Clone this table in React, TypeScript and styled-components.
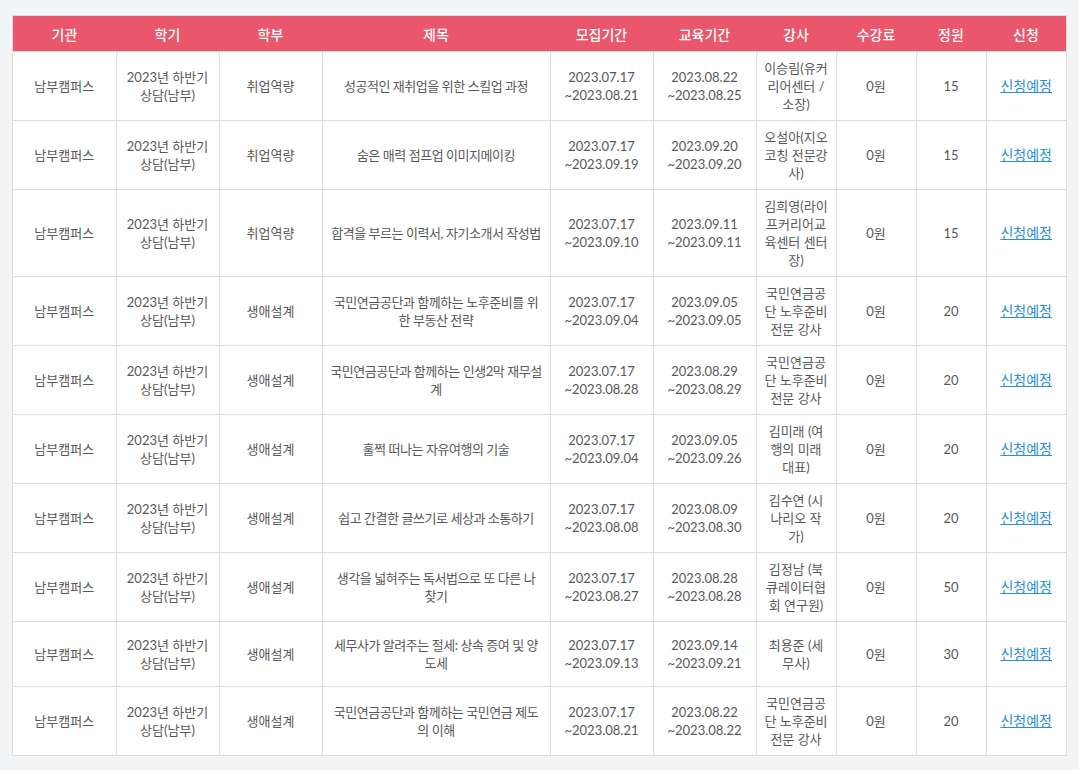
import React from "react";
import styled, { createGlobalStyle } from "styled-components";

const GlobalStyle = createGlobalStyle`
  html, body { margin: 0; padding: 0; background: #f3f4f6; }
  body { font-family: "Lato", "Noto Sans CJK KR", sans-serif; }
`;

const Page = styled.div`
  padding: 15px 14px 12px 12px;
  width: 1053px;
`;

const Table = styled.table`
  width: 1053px;
  border-collapse: collapse;
  table-layout: fixed;
  background: #fff;
  border: 1px solid #dcdcdc;
`;

const HeadCell = styled.th<{ $w: number }>`
  width: ${(p) => p.$w}px;
  height: 35px;
  padding: 0;
  background: #ea566b;
  color: #fff;
  font-size: 14px;
  font-weight: 500;
  text-align: center;
  vertical-align: middle;
  border: none;
`;

const Cell = styled.td`
  height: 50px;
  padding: 7px 8px;
  border: 1px solid #dcdcdc;
  color: #585858;
  font-size: 13px;
  line-height: 18px;
  text-align: center;
  vertical-align: middle;
  word-break: keep-all;
`;

const TitleCell = styled(Cell)`
  padding: 7px 7.5px;
  word-break: break-all;
  letter-spacing: -0.45px;
`;

const LecturerCell = styled(Cell)`
  padding: 7px 7px;
  word-break: break-all;
`;

const ApplyLink = styled.a`
  color: #2b8fd3;
  font-size: 14px;
  text-decoration: underline;
  cursor: pointer;
`;

const columns: [string, number][] = [
  ["기관", 103],
  ["학기", 103],
  ["학부", 103],
  ["제목", 228],
  ["모집기간", 103],
  ["교육기간", 103],
  ["강사", 80],
  ["수강료", 80],
  ["정원", 70],
  ["신청", 80],
];

type Row = {
  dept: string;
  title: string;
  recruit: [string, string];
  edu: [string, string];
  lecturer: string;
  cap: number;
};

const rows: Row[] = [
  { dept: "취업역량", title: "성공적인 재취업을 위한 스킬업 과정", recruit: ["2023.07.17", "~2023.08.21"], edu: ["2023.08.22", "~2023.08.25"], lecturer: "이승림(유커리어센터 / 소장)", cap: 15 },
  { dept: "취업역량", title: "숨은 매력 점프업 이미지메이킹", recruit: ["2023.07.17", "~2023.09.19"], edu: ["2023.09.20", "~2023.09.20"], lecturer: "오설아(지오코칭 전문강사)", cap: 15 },
  { dept: "취업역량", title: "합격을 부르는 이력서, 자기소개서 작성법", recruit: ["2023.07.17", "~2023.09.10"], edu: ["2023.09.11", "~2023.09.11"], lecturer: "김희영(라이프커리어교육센터 센터장)", cap: 15 },
  { dept: "생애설계", title: "국민연금공단과 함께하는 노후준비를 위한 부동산 전략", recruit: ["2023.07.17", "~2023.09.04"], edu: ["2023.09.05", "~2023.09.05"], lecturer: "국민연금공단 노후준비 전문 강사", cap: 20 },
  { dept: "생애설계", title: "국민연금공단과 함께하는 인생2막 재무설계", recruit: ["2023.07.17", "~2023.08.28"], edu: ["2023.08.29", "~2023.08.29"], lecturer: "국민연금공단 노후준비 전문 강사", cap: 20 },
  { dept: "생애설계", title: "훌쩍 떠나는 자유여행의 기술", recruit: ["2023.07.17", "~2023.09.04"], edu: ["2023.09.05", "~2023.09.26"], lecturer: "김미래 (여행의 미래 대표)", cap: 20 },
  { dept: "생애설계", title: "쉽고 간결한 글쓰기로 세상과 소통하기", recruit: ["2023.07.17", "~2023.08.08"], edu: ["2023.08.09", "~2023.08.30"], lecturer: "김수연 (시나리오 작가)", cap: 20 },
  { dept: "생애설계", title: "생각을 넓혀주는 독서법으로 또 다른 나 찾기", recruit: ["2023.07.17", "~2023.08.27"], edu: ["2023.08.28", "~2023.08.28"], lecturer: "김정남 (북큐레이터협회 연구원)", cap: 50 },
  { dept: "생애설계", title: "세무사가 알려주는 절세: 상속 증여 및 양도세", recruit: ["2023.07.17", "~2023.09.13"], edu: ["2023.09.14", "~2023.09.21"], lecturer: "최용준 (세무사)", cap: 30 },
  { dept: "생애설계", title: "국민연금공단과 함께하는 국민연금 제도의 이해", recruit: ["2023.07.17", "~2023.08.21"], edu: ["2023.08.22", "~2023.08.22"], lecturer: "국민연금공단 노후준비 전문 강사", cap: 20 },
];

export default function App() {
  return (
    <>
      <GlobalStyle />
      <Page>
        <Table>
          <thead>
            <tr>
              {columns.map(([label, w]) => (
                <HeadCell key={label} $w={w}>
                  {label}
                </HeadCell>
              ))}
            </tr>
          </thead>
          <tbody>
            {rows.map((r, i) => (
              <tr key={i}>
                <Cell>남부캠퍼스</Cell>
                <Cell>
                  2023년 하반기
                  <br />
                  상담(남부)
                </Cell>
                <Cell>{r.dept}</Cell>
                <TitleCell>{r.title}</TitleCell>
                <Cell>
                  {r.recruit[0]}
                  <br />
                  {r.recruit[1]}
                </Cell>
                <Cell>
                  {r.edu[0]}
                  <br />
                  {r.edu[1]}
                </Cell>
                <LecturerCell>{r.lecturer}</LecturerCell>
                <Cell>0원</Cell>
                <Cell>{r.cap}</Cell>
                <Cell>
                  <ApplyLink>신청예정</ApplyLink>
                </Cell>
              </tr>
            ))}
          </tbody>
        </Table>
      </Page>
    </>
  );
}
